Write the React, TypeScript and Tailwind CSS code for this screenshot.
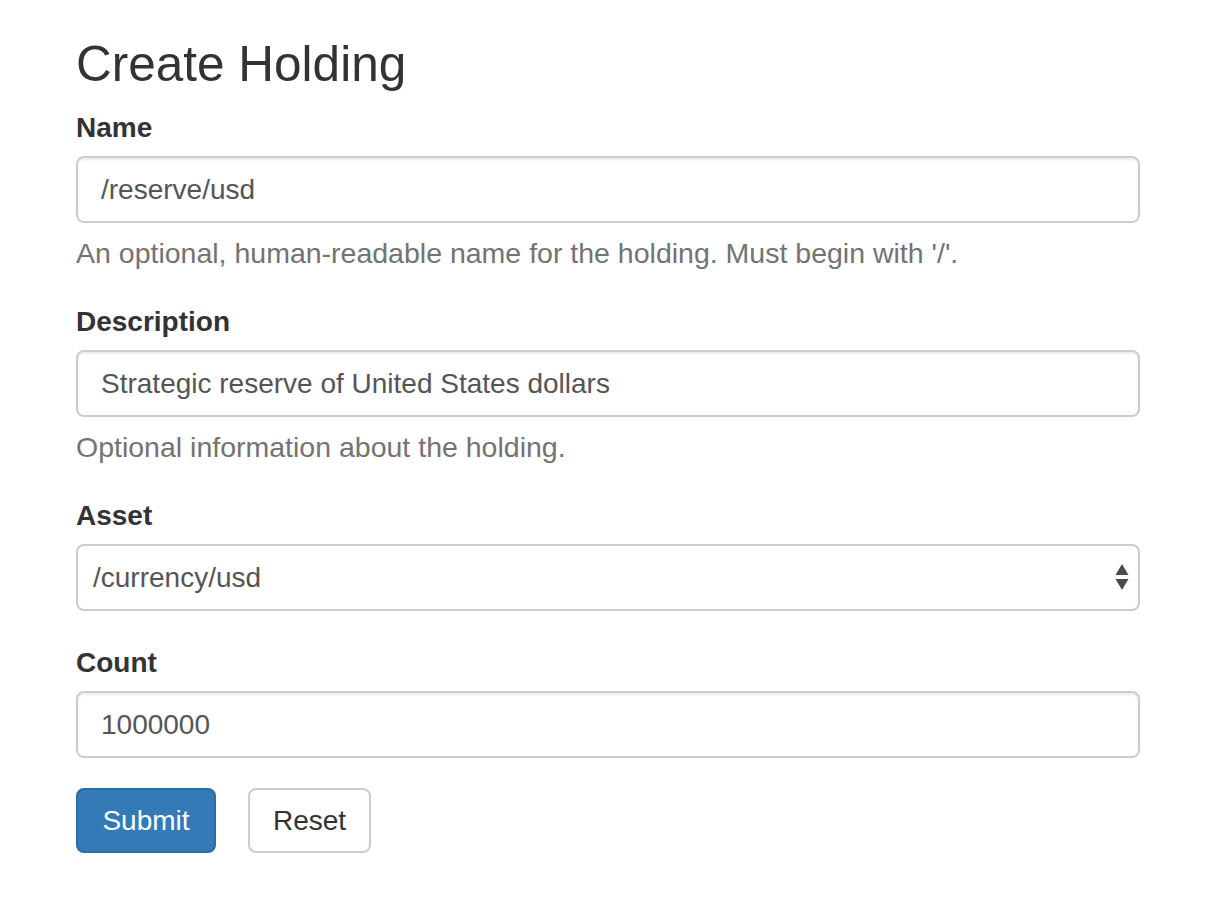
import React from "react";

const font = { fontFamily: '"Liberation Sans", Arial, Helvetica, sans-serif' };

function Label({ children }: { children: React.ReactNode }) {
  return (
    <label className="block text-[28px] leading-[40px] font-bold text-[#333] mb-2">
      {children}
    </label>
  );
}

function TextInput({ value }: { value: string }) {
  return (
    <div className="h-[67px] w-full rounded-[8px] border-2 border-[#cccccc] bg-white shadow-[inset_0_2px_2px_rgba(0,0,0,0.075)] flex items-center px-[23px] text-[28px] text-[#555]">
      {value}
    </div>
  );
}

function Help({ children }: { children: React.ReactNode }) {
  return <p className="mt-[10px] text-[28.5px] leading-[40px] text-[#737373]">{children}</p>;
}

export default function App() {
  return (
    <div className="min-h-[912px] w-[1214px] bg-white pl-[76px] pr-[74px] pt-[36px]" style={font}>
      <h1 className="text-[49.5px] leading-[55px] font-medium text-[#333] mb-[17px]">Create Holding</h1>

      <div className="mb-[29px]">
        <Label>Name</Label>
        <TextInput value="/reserve/usd" />
        <Help>An optional, human-readable name for the holding. Must begin with '/'.</Help>
      </div>

      <div className="mb-[29px]">
        <Label>Description</Label>
        <TextInput value="Strategic reserve of United States dollars" />
        <Help>Optional information about the holding.</Help>
      </div>

      <div className="mb-[32px]">
        <Label>Asset</Label>
        <div className="h-[67px] w-full rounded-[8px] border-2 border-[#cccccc] bg-white flex items-center justify-between pl-[15px] pr-[8px] text-[28px] text-[#555]">
          <span>/currency/usd</span>
          <svg width="14" height="27" viewBox="0 0 14 27" className="mr-[1px]">
            <polygon points="7,0 13.5,11 0.5,11" fill="#4b4b4b" />
            <polygon points="0.5,15 13.5,15 7,26" fill="#4b4b4b" />
          </svg>
        </div>
      </div>

      <div className="mb-[30px]">
        <Label>Count</Label>
        <TextInput value="1000000" />
      </div>

      <div className="flex gap-[32px]">
        <button className="h-[65px] w-[140px] rounded-[8px] border-2 border-[#2e6da4] bg-[#337ab7] text-[28px] text-white">
          Submit
        </button>
        <button className="h-[65px] w-[123px] rounded-[8px] border-2 border-[#cccccc] bg-white text-[28px] text-[#333]">
          Reset
        </button>
      </div>
    </div>
  );
}
